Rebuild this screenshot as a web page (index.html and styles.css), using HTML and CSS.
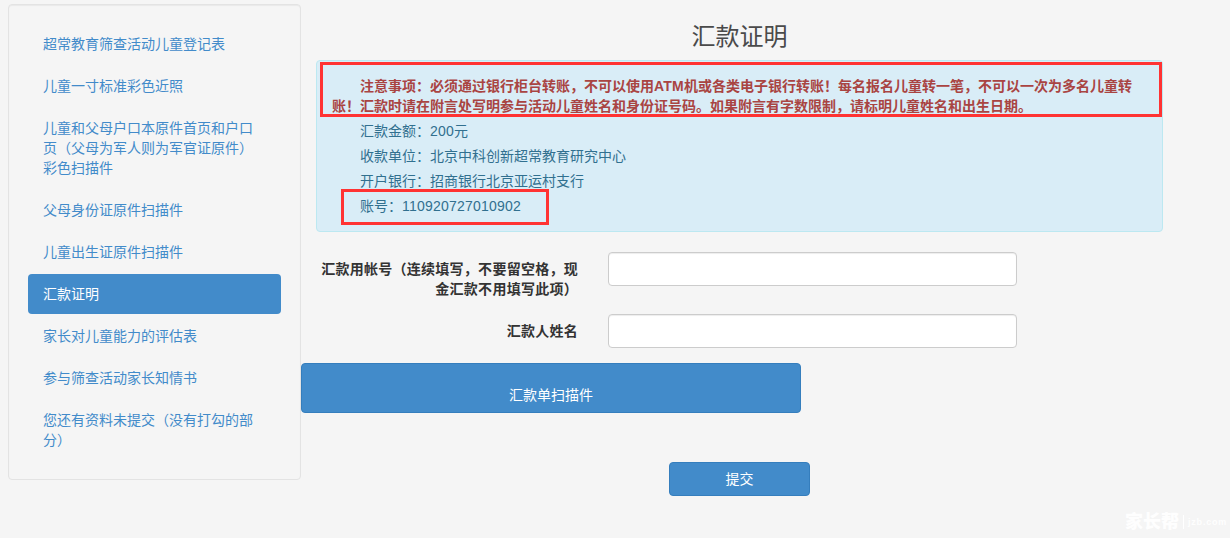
FILE: index.html
```html
<!DOCTYPE html>
<html lang="zh-CN">
<head>
<meta charset="utf-8">
<title>汇款证明</title>
<link rel="stylesheet" href="styles.css">
</head>
<body>
<div class="page">
  <aside class="well">
    <ul class="nav">
      <li><a href="#">超常教育筛查活动儿童登记表</a></li>
      <li><a href="#">儿童一寸标准彩色近照</a></li>
      <li><a href="#">儿童和父母户口本原件首页和户口页（父母为军人则为军官证原件）彩色扫描件</a></li>
      <li><a href="#">父母身份证原件扫描件</a></li>
      <li><a href="#">儿童出生证原件扫描件</a></li>
      <li><a href="#" class="active">汇款证明</a></li>
      <li><a href="#">家长对儿童能力的评估表</a></li>
      <li><a href="#">参与筛查活动家长知情书</a></li>
      <li><a href="#">您还有资料未提交（没有打勾的部分）</a></li>
    </ul>
  </aside>
  <main class="main">
    <h3 class="title">汇款证明</h3>
    <div class="alert">
      <p class="notice">注意事项：必须通过银行柜台转账，不可以使用<span class="digits">ATM</span>机或各类电子银行转账！每名报名儿童转一笔，不可以一次为多名儿童转账！汇款时请在附言处写明参与活动儿童姓名和身份证号码。如果附言有字数限制，请标明儿童姓名和出生日期。</p>
      <p>汇款金额：<span class="digits">200</span>元</p>
      <p>收款单位：北京中科创新超常教育研究中心</p>
      <p>开户银行：招商银行北京亚运村支行</p>
      <p class="last">账号：<span class="digits">110920727010902</span></p>
      <span class="mark mark-notice"></span>
      <span class="mark mark-account"></span>
    </div>
    <form class="form">
      <div class="row">
        <label class="label" for="acct">汇款用帐号（连续填写，不要留空格，现金汇款不用填写此项）</label>
        <div class="field"><input id="acct" class="input" type="text"></div>
      </div>
      <div class="row">
        <label class="label" for="name">汇款人姓名</label>
        <div class="field"><input id="name" class="input" type="text"></div>
      </div>
      <button type="button" class="btn upload">汇款单扫描件</button>
      <div class="actions"><button type="button" class="btn submit">提交</button></div>
    </form>
  </main>
</div>
<div class="watermark"><b class="wm-cn">家长帮</b><span class="wm-bar"></span><span class="wm-en">jzb.com</span></div>
</body>
</html>
```
FILE: styles.css
```css
* { box-sizing: border-box; }
html, body { margin: 0; height: 538px; overflow: hidden; }
body {
  background: #f5f5f5;
  color: #333;
  font-family: "Liberation Sans", "Noto Sans CJK SC", sans-serif;
  font-size: 14px;
  line-height: 20px;
  position: relative;
}
.page { display: flex; align-items: flex-start; padding-left: 8px; }
.well {
  width: 293px;
  height: 476px;
  margin-top: 4px;
  padding: 19px;
  background: #f5f5f5;
  border: 1px solid #e3e3e3;
  border-radius: 4px;
  box-shadow: inset 0 1px 1px rgba(0,0,0,.05);
}
.nav { list-style: none; margin: 0; padding: 0; display: flex; flex-direction: column; gap: 2px; }
.nav a { display: block; padding: 10px 15px; color: #428bca; text-decoration: none; border-radius: 4px; }
.nav a.active { background: #428bca; color: #fff; }
.main { width: 877px; padding: 23px 15px 0; }
.title {
  margin: 0 0 10px;
  color: #4a4a4a;
  font-size: 24px;
  font-weight: 400;
  line-height: 27px;
  text-align: center;
}
.alert {
  position: relative;
  padding: 15px;
  background: #d9edf7;
  border: 1px solid #bce8f1;
  border-radius: 4px;
  color: #31708f;
}
.alert p { margin: 0 0 5px; text-indent: 28px; }
.alert p.last { margin: 0; }
.alert p.notice { color: #a94442; font-weight: 700; }
.digits { letter-spacing: .22px; }
.mark { position: absolute; border: 3px solid #f33; }
.mark-notice { left: 3px; top: 1px; width: 842px; height: 55px; }
.mark-account { left: 24px; top: 128px; width: 208px; height: 36px; }
.form { margin-top: 20px; }
.row {
  display: grid;
  grid-template-columns: 292px 439px;
  margin: 0 -15px 15px;
}
.label {
  padding: 7px 15px 0;
  font-weight: 700;
  letter-spacing: .27px;
  text-align: right;
}
.field { padding: 0 15px; }
.input {
  display: block;
  width: 100%;
  height: 34px;
  padding: 6px 12px;
  background: #fff;
  border: 1px solid #ccc;
  border-radius: 4px;
  box-shadow: inset 0 1px 1px rgba(0,0,0,.075);
}
.btn {
  display: block;
  background: #428bca;
  border: 1px solid #357ebd;
  border-radius: 4px;
  color: #fff;
  font: inherit;
  text-align: center;
}
.upload { width: 500px; height: 50px; margin: 0 0 0 -15px; padding: 21px 12px 7px; }
.actions { display: flex; justify-content: center; margin-top: 49px; }
.submit { width: 141px; height: 34px; padding: 6px 12px; }
.watermark {
  position: absolute;
  left: 1125px;
  top: 513px;
  display: flex;
  align-items: center;
  color: rgba(255,255,255,.95);
  line-height: 18px;
}
.wm-cn { font-size: 18px; font-weight: 900; }
.wm-bar { width: 1px; height: 14px; margin: 0 4px 0 4px; background: #fff; }
.wm-en { font-size: 9px; font-weight: 700; letter-spacing: .8px; }
```
